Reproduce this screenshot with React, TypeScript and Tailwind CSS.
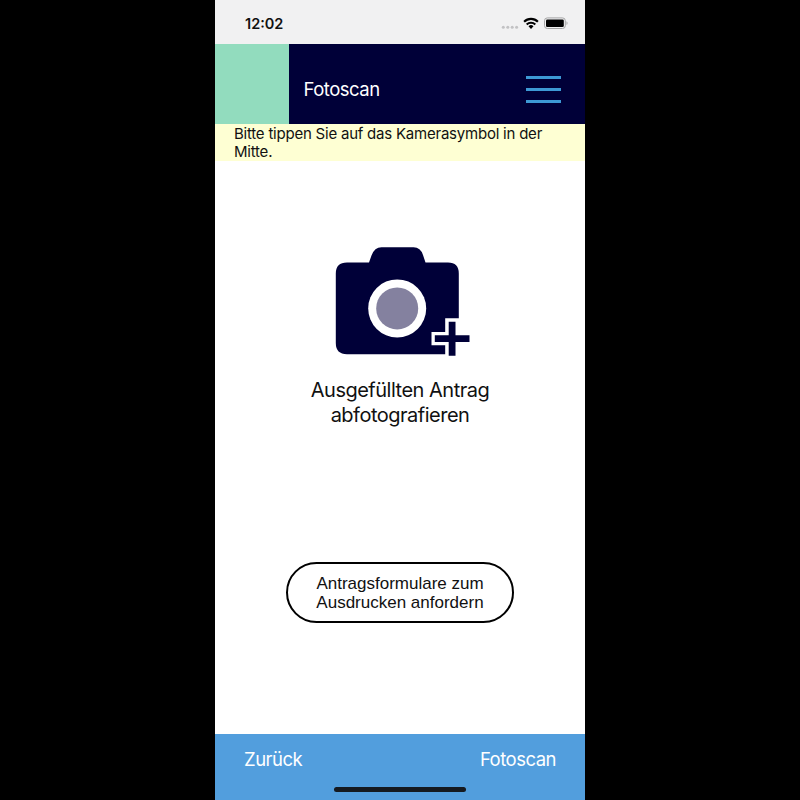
function StatusBar() {
  return (
    <div className="flex h-[44px] shrink-0 items-start justify-between bg-[#f1f1f2] pr-[16px] pl-[30px]">
      <span className="pt-[14px] text-[14.5px] leading-[20px] font-semibold text-[#111]">12:02</span>
      <svg className="mt-[16px]" width="68" height="16" viewBox="501 16 68 16">
        <g fill="#c2c2c4">
          <circle cx="503.3" cy="27.2" r="1.5" />
          <circle cx="507.8" cy="27.2" r="1.5" />
          <circle cx="512.2" cy="27.2" r="1.5" />
          <circle cx="516.6" cy="27.2" r="1.5" />
        </g>
        <g fill="none" stroke="#000" strokeWidth="2.1">
          <path d="M524.1 21.7a9.8 9.8 0 0 1 13.8 0" />
          <path d="M526.7 24.5a6.2 6.2 0 0 1 8.6 0" />
        </g>
        <path d="M528.5 26.2a3.7 3.7 0 0 1 5 0L531 28.9z" fill="#000" />
        <rect x="544.5" y="17.9" width="20.8" height="10.6" rx="2.8" fill="none" stroke="#a4a4a5" />
        <rect x="546" y="19.4" width="17.8" height="7.6" rx="1.3" fill="#000" />
        <path d="M566.5 21.3c1.4.6 1.4 3.2 0 3.8z" fill="#a4a4a5" />
      </svg>
    </div>
  );
}

function CameraIcon() {
  return (
    <svg width="136" height="112" viewBox="335 246 136 112" className="ml-[6px]">
      <path
        d="M347 262.5H369L371.5 255.5Q374.5 247.2 381.5 247.2H413.5Q420.5 247.2 423 255L425.5 262.5H448Q458.8 262.5 458.8 273.5V354.2H347Q335.8 354.2 335.8 343V273.5Q335.8 262.5 347 262.5Z"
        fill="#000038"
      />
      <circle cx="397.2" cy="308.4" r="29" fill="#fff" />
      <circle cx="397.2" cy="308.4" r="21" fill="#84819f" />
      <path d="M445.2 318.3H460V358H445.2V345.3H431.5V332H445.2Z" fill="#fff" />
      <path d="M448.7 321.7H455.5V335.3H469.5V342H455.5V355.8H448.7V342H434.8V335.3H448.7Z" fill="#000038" />
    </svg>
  );
}

export default function App() {
  return (
    <div className="flex h-[800px] w-[800px] justify-center bg-black font-[Inter,'Liberation_Sans',sans-serif]">
      <div className="flex w-[370px] flex-col bg-white">
        <StatusBar />
        <header className="flex h-[80px] shrink-0 items-start bg-[#000038] pr-[24px]">
          <div className="h-[80px] w-[74px] bg-[#92dcbe]" />
          <h1 className="flex-1 pt-[33px] pl-[14.5px] text-[18.5px] leading-[24px] tracking-[-0.5px] text-white">Fotoscan</h1>
          <button aria-label="Menü" className="mt-[32px] flex w-[35px] flex-col gap-[9px]">
            <span className="h-[3px] bg-[#3d99d5]" />
            <span className="h-[3px] bg-[#3d99d5]" />
            <span className="h-[3px] bg-[#3d99d5]" />
          </button>
        </header>
        <p className="h-[37px] shrink-0 bg-[#feffd3] pt-px pl-[19px] text-[15px] leading-[18px] tracking-[-0.22px] text-[#111]">
          Bitte tippen Sie auf das Kamerasymbol in der
          <br />
          Mitte.
        </p>
        <main className="flex flex-1 flex-col items-center pt-[85px]">
          <CameraIcon />
          <p className="mt-[20px] text-center text-[20px] leading-[25px] tracking-[-0.5px] text-[#111]">
            Ausgefüllten Antrag
            <br />
            abfotografieren
          </p>
          <button className="mt-[134px] h-[61px] w-[228px] rounded-full border-2 border-black pt-px text-center font-['Liberation_Sans',Arial,sans-serif] text-[17px] leading-[19px] text-[#111]">
            Antragsformulare zum
            <br />
            Ausdrucken anfordern
          </button>
        </main>
        <footer className="flex h-[66px] shrink-0 flex-col items-center bg-[#529edd] text-white">
          <div className="flex w-full justify-between pt-[13px] pr-[29px] pl-[29px] text-[18.5px] leading-[24px] tracking-[-0.5px]">
            <span>Zurück</span>
            <span>Fotoscan</span>
          </div>
          <div className="mt-[16px] h-[5px] w-[132px] rounded-full bg-[#151a20]" />
        </footer>
      </div>
    </div>
  );
}
